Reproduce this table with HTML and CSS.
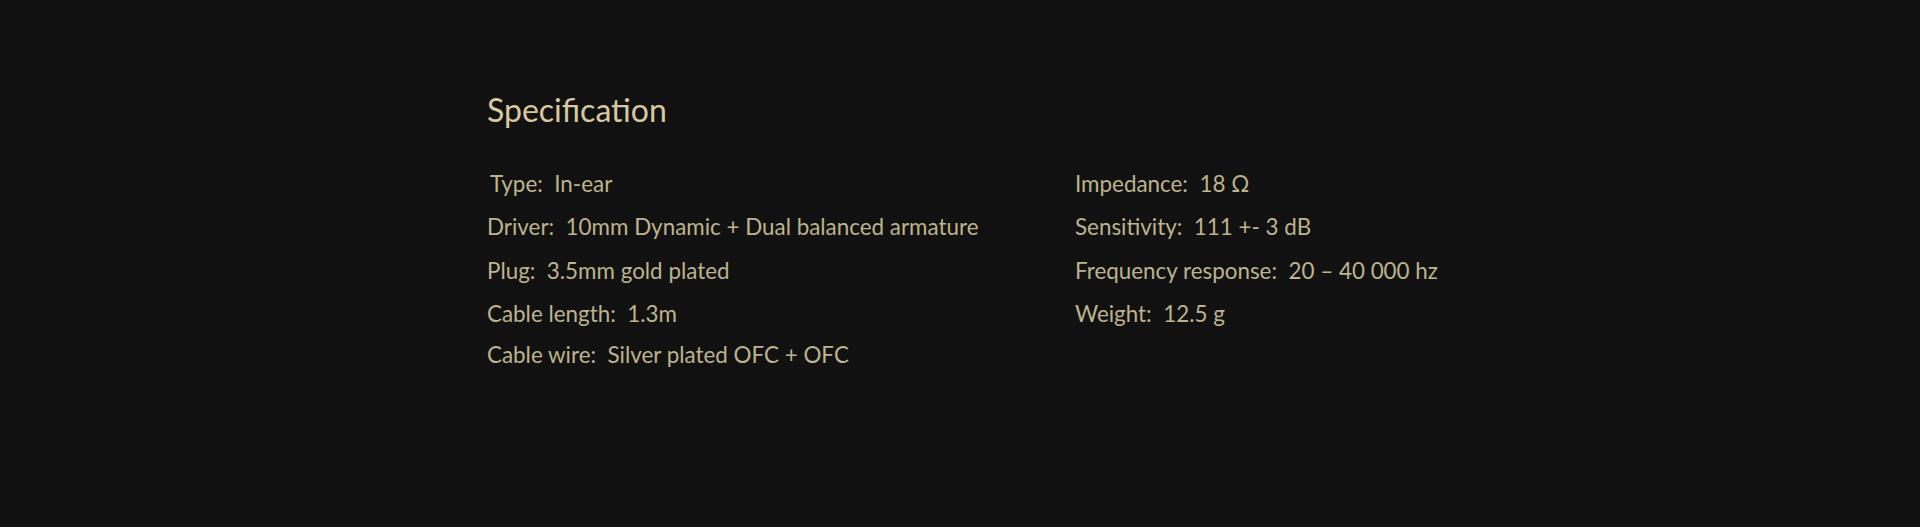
FILE: index.html
```html
<!DOCTYPE html>
<html lang="en">
<head>
<meta charset="utf-8">
<title>Specification</title>
<link rel="stylesheet" href="styles.css">
</head>
<body>
<section class="spec">
  <h2 class="spec-title">Specification</h2>
  <div class="spec-grid">
    <p class="spec-item spec-item--indent">Type:&nbsp; In-ear</p>
    <p class="spec-item">Impedance:&nbsp; 18 Ω</p>
    <p class="spec-item">Driver:&nbsp; 10mm Dynamic + Dual balanced armature</p>
    <p class="spec-item">Sensitivity:&nbsp; 111 +- 3 dB</p>
    <p class="spec-item">Plug:&nbsp; 3.5mm gold plated</p>
    <p class="spec-item">Frequency response:&nbsp; 20 – 40 000 hz</p>
    <p class="spec-item">Cable length:&nbsp; 1.3m</p>
    <p class="spec-item">Weight:&nbsp; 12.5 g</p>
    <p class="spec-item">Cable wire:&nbsp; Silver plated OFC + OFC</p>
  </div>
</section>
</body>
</html>
```

FILE: styles.css
```css
html, body {
  margin: 0;
  padding: 0;
  background: #111111;
}

body {
  font-family: Lato, "Noto Sans", sans-serif;
  color: #bdb38c;
  height: 527px;
  overflow: hidden;
}

.spec {
  width: 946px;
  margin: 0 auto;
  padding-top: 90px;
}

.spec-title {
  margin: 0;
  font-weight: 400;
  font-size: 32px;
  line-height: 40px;
  color: #d8c89f;
}

.spec-grid {
  display: grid;
  grid-template-columns: 588px 1fr;
  grid-template-rows: 43px 44px 43px 41px 43px;
  margin-top: 32px;
}

.spec-item {
  margin: 0;
  font-size: 22.4px;
  line-height: 43px;
  white-space: nowrap;
}

.spec-item--indent {
  padding-left: 3px;
}
```
